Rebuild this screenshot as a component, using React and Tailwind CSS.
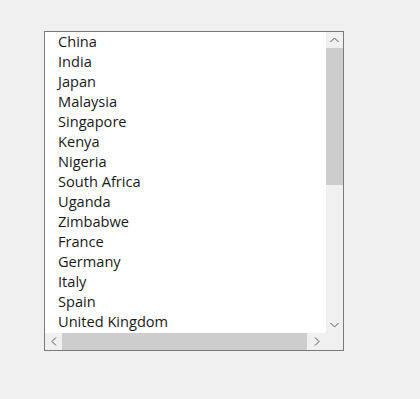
import React from 'react';

const countries = [
  'China',
  'India',
  'Japan',
  'Malaysia',
  'Singapore',
  'Kenya',
  'Nigeria',
  'South Africa',
  'Uganda',
  'Zimbabwe',
  'France',
  'Germany',
  'Italy',
  'Spain',
  'United Kingdom',
];

function Chevron({ dir }) {
  // small thin chevrons used in the classic scrollbar buttons
  const paths = {
    up: 'M0.5 5 L4.5 1 L8.5 5',
    down: 'M0.5 1 L4.5 5 L8.5 1',
    left: 'M5 0.5 L1 4.5 L5 8.5',
    right: 'M1 0.5 L5 4.5 L1 8.5',
  };
  const vertical = dir === 'up' || dir === 'down';
  return (
    <svg
      width={vertical ? 9 : 6}
      height={vertical ? 6 : 9}
      viewBox={vertical ? '0 0 9 6' : '0 0 6 9'}
      fill="none"
      stroke="#555555"
      strokeWidth="1"
    >
      <path d={paths[dir]} />
    </svg>
  );
}

export default function App() {
  return (
    <div className="w-[420px] h-[399px] bg-[#f0f0f0] pt-[31px] pl-[44px]" style={{ fontFamily: '"Open Sans", "Noto Sans", sans-serif' }}>
      <div className="w-[300px] h-[320px] border border-[#7a7a7a] bg-white flex flex-col">
        {/* list + vertical scrollbar */}
        <div className="flex h-[301px]">
          <ul className="flex-1 overflow-hidden pl-[13px]">
            {countries.map((c) => (
              <li key={c} className="h-[20px] leading-[18px] text-[14.6px] text-[#1a1a1a] whitespace-nowrap">
                {c}
              </li>
            ))}
          </ul>
          <div className="w-[17px] bg-[#f0f0f0] flex flex-col">
            <div className="h-[16px] flex items-center justify-center">
              <Chevron dir="up" />
            </div>
            <div className="h-[137px] bg-[#cdcdcd]" />
            <div className="flex-1" />
            <div className="h-[17px] flex items-center justify-center">
              <Chevron dir="down" />
            </div>
          </div>
        </div>
        {/* horizontal scrollbar */}
        <div className="flex h-[17px] bg-[#f0f0f0]">
          <div className="w-[17px] flex items-center justify-center">
            <Chevron dir="left" />
          </div>
          <div className="w-[245px] bg-[#cdcdcd]" />
          <div className="flex-1 flex items-center justify-center">
            <Chevron dir="right" />
          </div>
          <div className="w-[17px]" />
        </div>
      </div>
    </div>
  );
}
